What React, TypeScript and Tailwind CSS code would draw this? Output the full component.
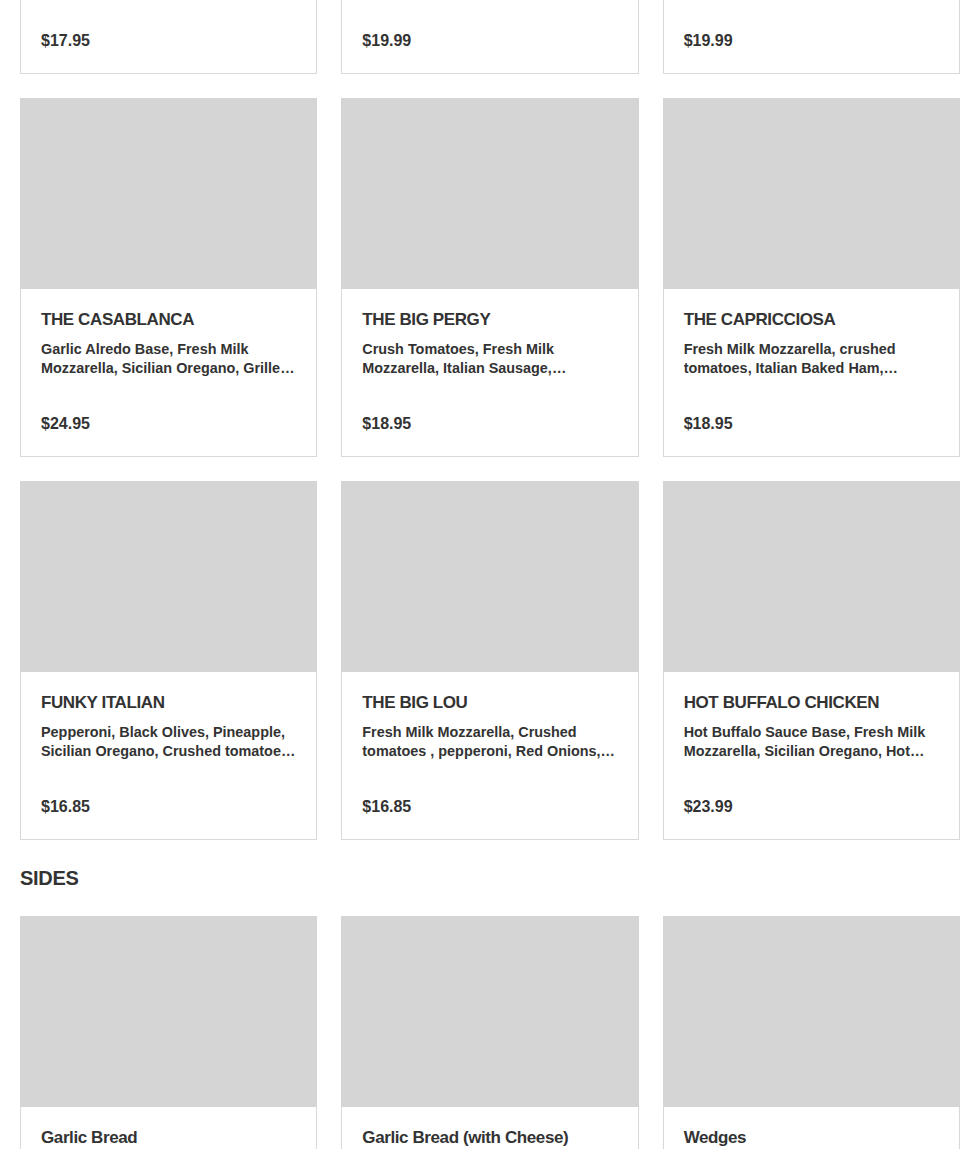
const pizzas = [
  {
    name: 'THE CASABLANCA',
    desc: 'Garlic Alredo Base, Fresh Milk Mozzarella, Sicilian Oregano, Grilled Chicken, Baby Spinach, Roasted Garlic',
    price: '$24.95',
  },
  {
    name: 'THE BIG PERGY',
    desc: 'Crush Tomatoes, Fresh Milk Mozzarella, Italian Sausage, Pepperoni, Roasted Peppers, Red Onions',
    price: '$18.95',
  },
  {
    name: 'THE CAPRICCIOSA',
    desc: 'Fresh Milk Mozzarella, crushed tomatoes, Italian Baked Ham, Mushrooms, Artichokes, Olives',
    price: '$18.95',
  },
  {
    name: 'FUNKY ITALIAN',
    desc: 'Pepperoni, Black Olives, Pineapple, Sicilian Oregano, Crushed tomatoes, Fresh Milk Mozzarella',
    price: '$16.85',
  },
  {
    name: 'THE BIG LOU',
    desc: 'Fresh Milk Mozzarella, Crushed tomatoes , pepperoni, Red Onions, Green Peppers, Mushrooms',
    price: '$16.85',
  },
  {
    name: 'HOT BUFFALO CHICKEN',
    desc: 'Hot Buffalo Sauce Base, Fresh Milk Mozzarella, Sicilian Oregano, Hot Buffalo Chicken, Red Onions',
    price: '$23.99',
  },
]

const sides = ['Garlic Bread', 'Garlic Bread (with Cheese)', 'Wedges']

function Card({ name, desc, price }: { name: string; desc: string; price: string }) {
  return (
    <div className="border border-[#d9d9d9] bg-white flex flex-col">
      <div className="h-[191px] bg-[#d5d5d5] -mx-px -mt-px" />
      <div className="px-5 pt-[19px] pb-5">
        <h3 className="text-[17px] leading-6 font-bold tracking-[-0.4px]">{name}</h3>
        <p className="mt-2 h-[38px] text-[14.4px] leading-[19px] font-bold line-clamp-2">{desc}</p>
        <p className="mt-[34px] text-[16px] leading-6 font-bold">{price}</p>
      </div>
    </div>
  )
}

export default function App() {
  return (
    <div className="bg-white text-[#333] min-h-screen pl-5 pr-[5px] font-['Liberation_Sans',Arial,sans-serif]">
      {/* row cut off at the top of the view */}
      <div className="grid grid-cols-3 gap-6">
        {['$17.95', '$19.99', '$19.99'].map((p, i) => (
          <div key={i} className="border-x border-b border-[#d9d9d9] px-5 pt-[29px] pb-5">
            <p className="text-[16px] leading-6 font-bold">{p}</p>
          </div>
        ))}
      </div>

      <div className="grid grid-cols-3 gap-6 mt-6">
        {pizzas.map((p) => (
          <Card key={p.name} {...p} />
        ))}
      </div>

      <h2 className="mt-6 mb-6 text-[20px] leading-7 font-bold tracking-[-0.3px]">SIDES</h2>

      <div className="grid grid-cols-3 gap-6">
        {sides.map((s) => (
          <div key={s} className="border border-[#d9d9d9] bg-white">
            <div className="h-[191px] bg-[#d5d5d5] -mx-px -mt-px" />
            <div className="px-5 pt-[19px] pb-5">
              <h3 className="text-[17px] leading-6 font-bold tracking-[-0.4px]">{s}</h3>
              <p className="mt-2 h-[38px] text-[14.4px] leading-[19px] font-bold">Served fresh from the oven</p>
              <p className="mt-[34px] text-[16px] leading-6 font-bold">$6.95</p>
            </div>
          </div>
        ))}
      </div>
    </div>
  )
}
